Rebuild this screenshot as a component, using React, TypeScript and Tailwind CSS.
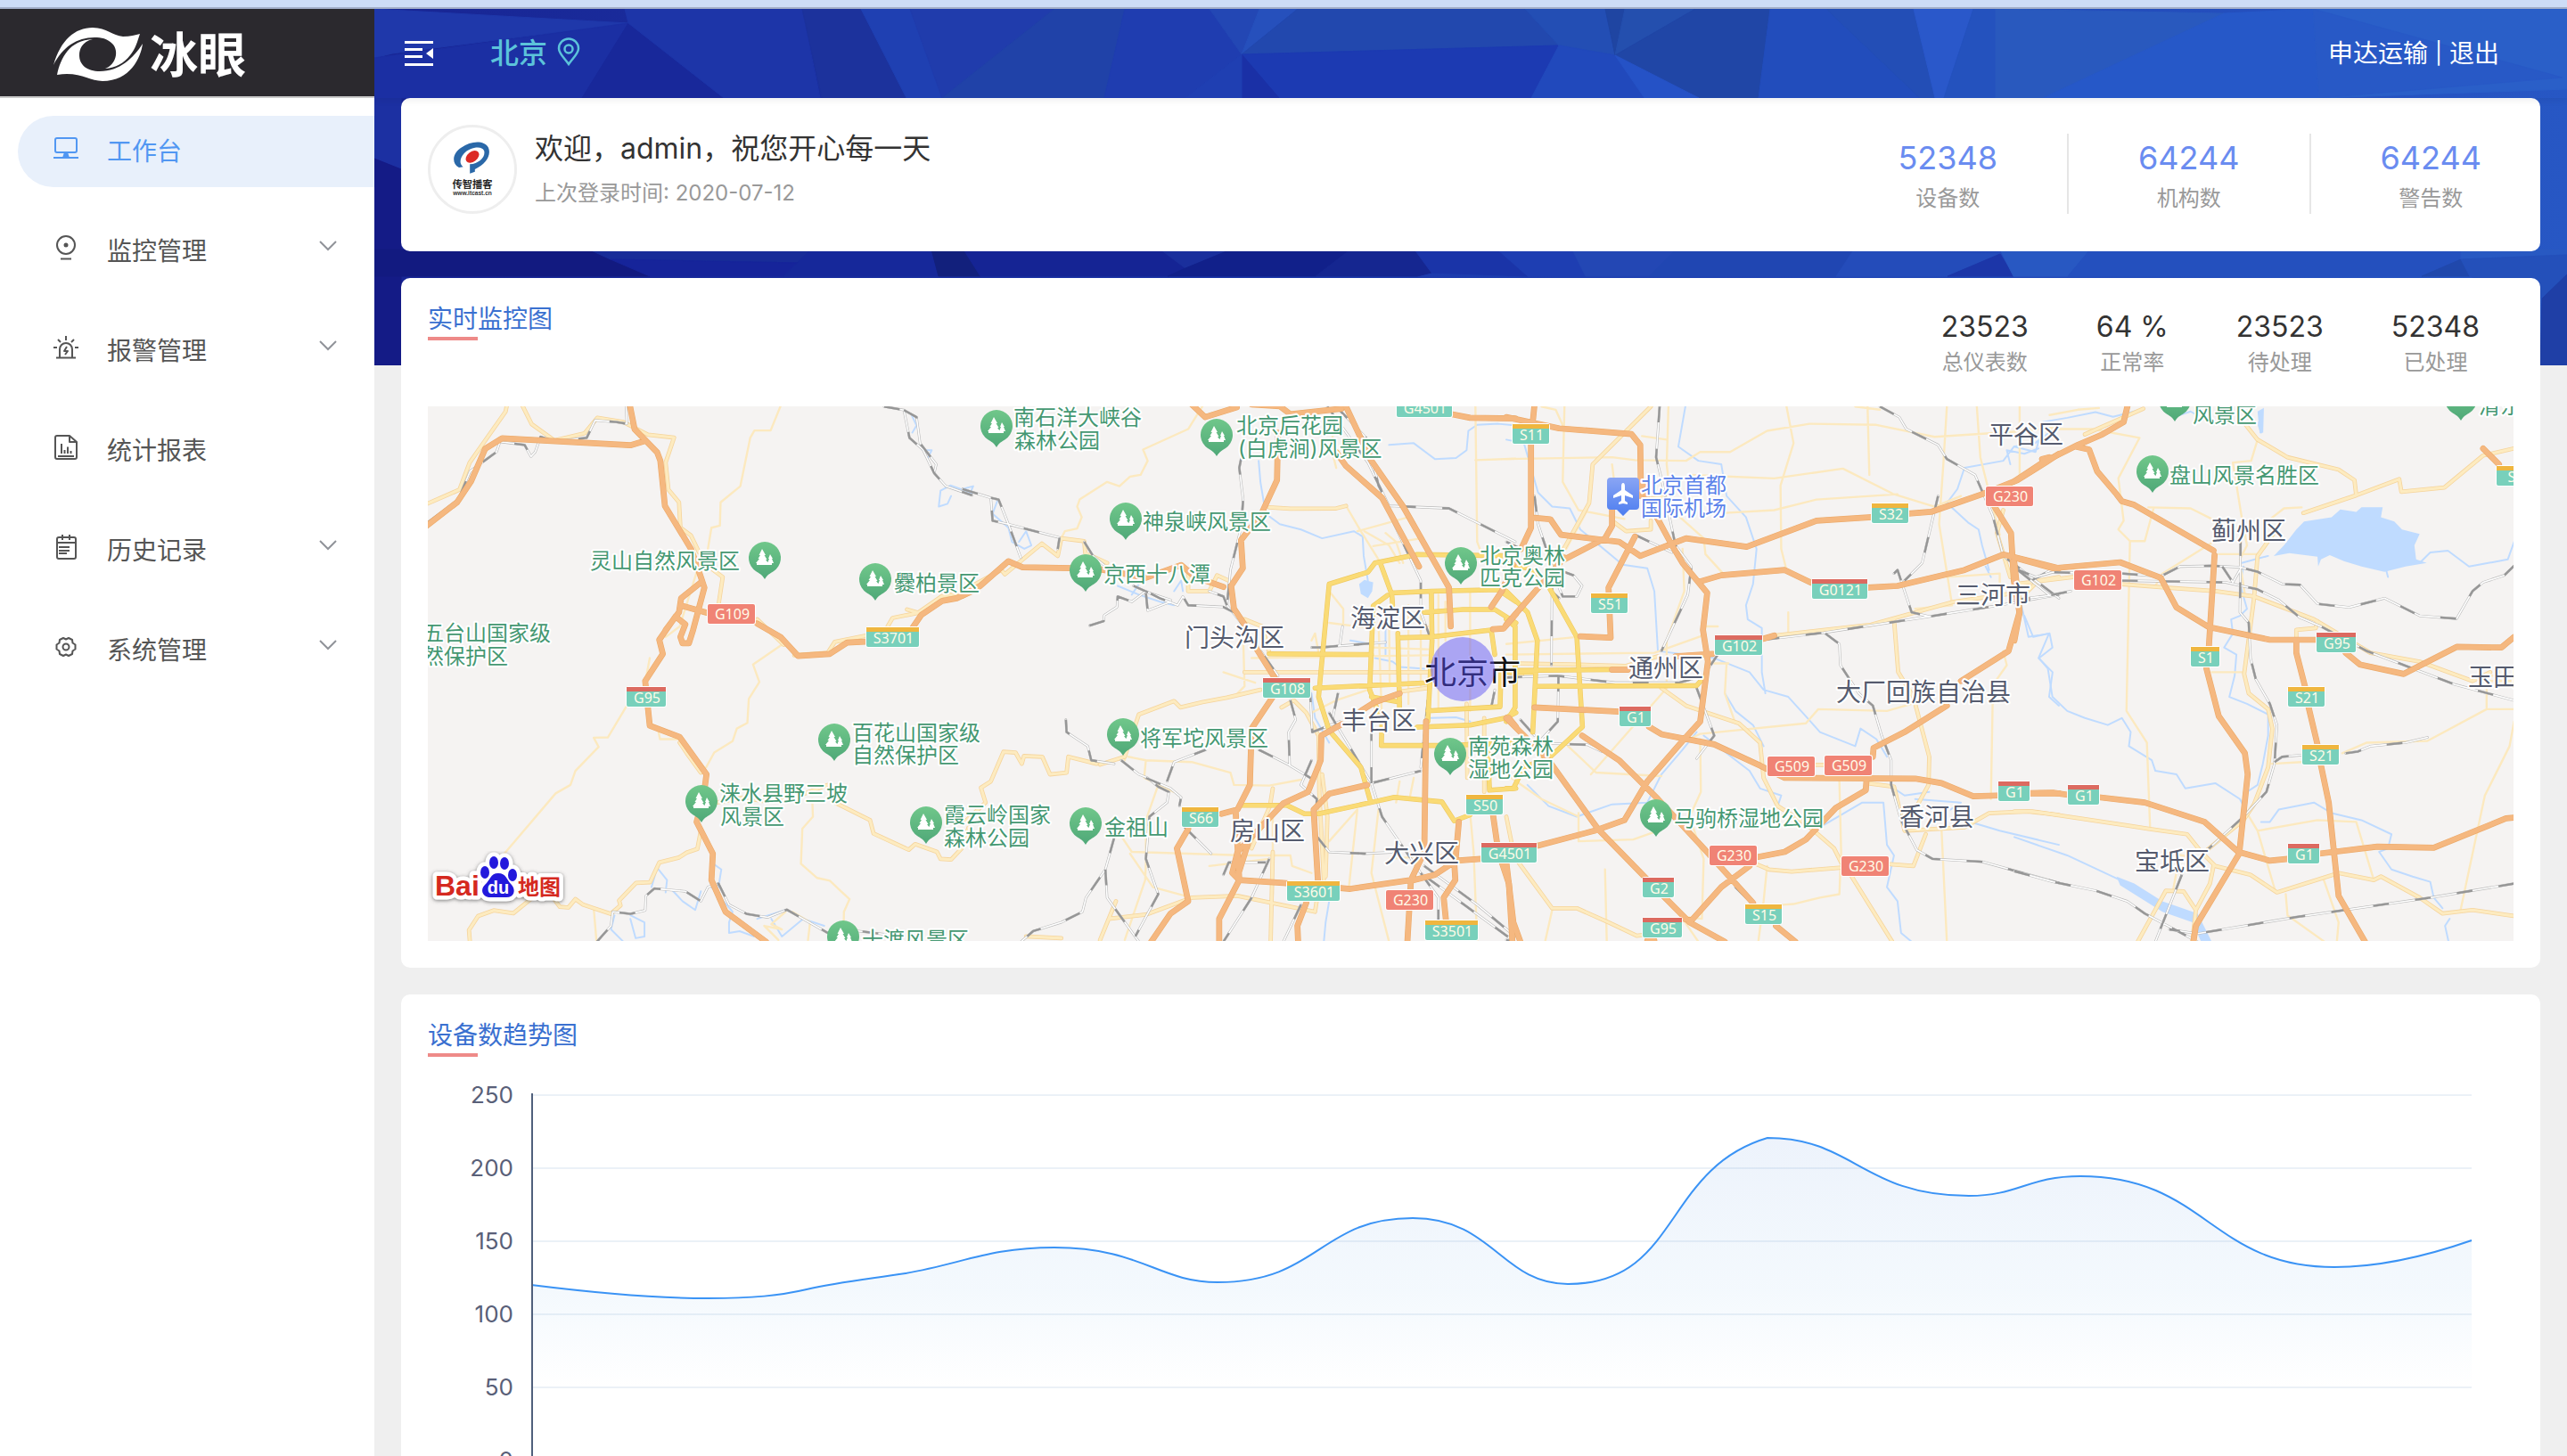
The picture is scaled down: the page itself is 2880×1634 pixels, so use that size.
import React from "react";

type RoadSet = { hw: string; ring: string; sec: string; min: string; river: string; rail: string };

/* Road geometry, one entry per map tile. */
const tiles: { x: number; roads: RoadSet }[] = [
  {
    x: -10,
    roads: {
      hw: "M0 392L25 372 108 308 148 248 188 156 236 126 600 146 640 134M598 30L612 100 676 166 685 190 698 318 772 440 800 520 810 550 778 670 766 708 748 708 742 690 756 654 728 632 682 698 692 738 642 815 655 942 740 974 816 1080 808 1140 788 1215 834 1305 830 1380 870 1470 985 1555M800 535L744 580 738 620 700 670M748 602L820 622M960 652L1026 690 1076 744 1166 738 1215 706 1290 702M1400 665L1425 628 1484 588 1526 580 1570 560",
      ring: "",
      sec: "M0 322L115 272 144 195 246 50 250 30M292 30L320 86 384 132 470 112 506 68 580 80 650 116 724 124 700 195 708 272 738 308 742 380 772 402 795 450M835 500L862 520 850 600M960 640L1035 712M1065 742L1160 735 1180 704 1300 680M1330 660L1344 636 1415 622 1484 574 1570 560M1385 612L1420 622M145 1560L142 1522 168 1482 212 1466 268 1474 320 1432M380 1430L400 1456 424 1458 444 1434 466 1450 544 1476 572 1452 568 1438 616 1388 656 1386 682 1330 738 1316 760 1302 790 1292 800 1240M845 1160L920 1146 980 1156 1040 1150M1080 1140L1160 1110M1180 1160L1280 1210 1290 1248 1390 1294 1408 1278 1470 1300 1480 1320 1510 1322 1540 1290 1560 1230M740 990L760 1020 800 1075",
      min: "M1028 30L998 104 952 104 940 125 912 262 856 308 854 374 830 380 820 440M790 500L740 660 700 690M590 885L536 975 496 976 510 1002 444 1070 430 1110 388 1134 238 1310M1030 712L948 768 966 818 936 866 932 934 902 950 890 986 838 1018 815 1060M680 960L684 980 740 980M655 750L640 830M1116 1150L1118 1200 1088 1234 1084 1334 1130 1374 1166 1382 1196 1410 1222 1434 1206 1470 1204 1555M496 1460L504 1555M1040 1470L1000 1505 1030 1520 980 1510 1020 1550M1060 1470L1110 1500 1104 1550",
      river: "M1398 60L1412 90 1400 110M1430 160L1455 160 1445 180M1570 282L1508 260 1480 275 1475 320 1500 312 1510 290M660 1400L676 1345 704 1380 700 1415M720 1410L748 1440 784 1465 800 1412M830 1330L858 1350 850 1400M830 1400L890 1470 880 1500 880 1530 910 1525 950 1540M555 1480L545 1520 580 1555M600 1480L640 1500 640 1540 615 1545 600 1490M1000 1490L1030 1540 1090 1490 1150 1510M960 1490L1040 1465",
      rail: "M25 365L112 300 145 220 220 165 230 136 300 145 318 178 330 165 345 122 385 135 476 125 500 75 560 80 590 85 588 36M1320 36L1376 46 1392 125 1430 158 1462 225 1495 262 1570 288M1376 46L1412 66 1422 140 1468 200 1462 225M505 1555L545 1510 550 1470 600 1476 642 1466 644 1425 668 1404 756 1412 800 1440 820 1400 850 1390 880 1450 930 1476 990 1486 1044 1464 1160 1530 1210 1520 1330 1535",
    },
  },
  {
    x: 600,
    roads: {
      hw: "M0 572L50 545 130 475 170 492 380 496 520 522 620 486 660 520 740 548M650 30L688 66 778 38M820 30L900 35 930 58 1075 42M895 110L892 245 848 340 790 415 795 495 762 545 770 610 800 655M1085 30L1160 190 1250 320 1380 550 1385 660M1060 165L1088 205 1190 295 1295 490M1568 70L1440 68 1390 58M835 725L888 810M880 860L820 950 815 1110 780 1180 735 1192M1570 625L1535 666 1505 668M1568 470L1530 560 1500 605M1240 850L1170 875 1130 900M1075 938L1018 970 1016 1040 980 1130 910 1162 780 1300 765 1360 785 1380 728 1490 728 1555M1148 1110L1040 1135 996 1180 1008 1380M1315 930L1310 1300 1272 1380 1100 1405 910 1388 785 1380 775 1190M640 1235L608 1290 640 1440 590 1475 535 1555M810 1275L780 1370M975 1445L950 1510 952 1555M1470 1320L1400 1325 1340 1365 1272 1382 1262 1555M1395 1330L1398 1380 1365 1430 1372 1500M1408 1215L1398 1330M1505 1195L1520 1300 1550 1390 1560 1555M1550 920L1570 945",
      ring: "M870 738L1160 740M1000 835L1320 820M1570 460L1290 456 1170 480 1150 506 1040 540 1010 860 1040 955 1130 1060 1158 1160 1225 1145 1360 1158 1395 1212 1440 1195M1158 1160L1010 1192 970 1192 920 1168 790 1168M1185 480L1218 570 1220 600M1205 572L1165 602 1155 840 1190 930 1188 998 1370 998M1215 565L1330 560 1520 556 1570 590M1330 560L1332 700 1320 930M1235 680L1240 900M1245 692L1330 690 1500 670 1510 740M1310 620L1420 612 1510 612 1570 650M1320 900L1525 888 1528 780M1290 946L1440 940 1540 920 1570 905M1490 1000L1495 1125 1570 1120M1380 998L1570 990M1160 860L1240 875",
      sec: "M0 560L110 500 120 512 225 425 270 460 280 410 345 418 348 452 410 480M870 322L930 326 1060 325 1088 318M640 510L640 560 700 560 722 515 755 530M800 790L1320 790M1240 845L1320 835M800 640L850 660 870 735M380 1050L300 1030 295 1075 248 1080 226 1030 174 1028 168 1050 150 1018 116 1016 80 1100 52 1118 65 1160 0 1220M390 1052L460 1030 500 910 600 872 618 890 680 875 750 862 845 840M905 890L940 870 975 905 1010 970 1012 1130 1025 1380M1020 1080L1035 1200 1030 1370M880 1120L872 1170 820 1290M390 1550L435 1440M415 1490L520 1478 650 1430 780 1425 1000 1470 1012 1390M880 1300L874 1555M1430 880L1432 1090M1480 920L1480 1130M640 530L640 500M180 1540L280 1545",
      min: "M680 36L640 100 512 158 525 190 505 230 475 235 445 262 410 250 332 300 325 320 338 350 325 382 290 390 280 410M1455 36L1460 420 1490 500M1060 60L1045 150 1060 210M1088 318L1130 390 1180 470 1215 570M1120 390L1265 350M1165 432L1290 412M1140 390L1210 430 1240 480M1200 395L1230 420 1250 480M795 655L800 830 780 850M1180 650L1190 930M1210 640L1212 830M1265 600L1265 880M1300 600L1300 830M1040 650L1160 665M1160 660L1320 660M990 700L1000 680 1010 735M1350 570L1350 900M1440 560L1440 900M470 1030L520 1040 650 1045 760 1075 770 1110 870 1112 960 1095M520 1040L515 1090 600 1130M555 1110L520 1210 520 1330 518 1380 460 1550M440 1240L480 1300 800 1310 930 1310 935 1340 990 1360M475 1305L540 1400 650 1430M880 1190L880 1420M1040 1270L1120 1180 1096 1400M1280 1090L1270 1140M1180 1180L1160 1360 1210 1555M1440 1190L1450 1300 1460 1555M1210 1320L1370 1308M1040 560L1080 610 1080 650M820 750L1320 742M1160 720L1320 725M1370 590L1370 700M740 790L830 820M1240 1100L1230 1160M480 940L460 1040M1455 188L1568 184M700 1340L870 1320M990 905L1060 870 1150 840",
      river: "M840 190L845 250 860 340 900 370 960 385 1020 410 1110 390 1135 405 1138 460 1150 530M1570 90L1520 85 1460 88 1435 105 1430 160 1400 182 1340 185 1280 140 1210 145M100 300L85 340 130 380 140 420 175 440 195 430 180 390 160 420M0 270L30 262 20 285M440 545L500 570 560 590 600 600M480 570L500 540M600 560L620 530 625 560M990 850L1000 920 1040 990M1170 750L1220 760 1240 775 1310 780M1040 1440L1030 1500 1025 1555M1200 650L1200 740M1330 920L1400 918 1440 930M1100 700L1160 710",
      rail: "M0 270L80 295 85 360 130 370 275 408M80 295L102 300 130 370 165 465M275 408L270 440M345 420L370 460 400 485M360 658L400 645 402 628 438 605 440 575 480 590 520 560 560 580 610 600 625 575 640 600 740 605 770 620M485 545L530 565 590 585M750 600L740 575 700 560M520 565L525 615 590 590M790 185L785 210 796 300 790 380 760 500 750 600 790 650 895 800M990 720L1010 720 1200 705M1020 720L1070 715 1078 660M1035 36L1150 195 1210 318M1060 36L1150 130 1180 260 1210 318 1380 325 1568 420M1200 318L1300 530 1300 620 1330 700M890 810L880 850M930 870L945 925 925 960 928 1055 990 1092M985 830L992 960 1070 930M1040 905L1160 1105 1300 1070M1065 850L1050 920M1320 870L1300 1060M1160 940L1160 1105 1190 1200 1300 1360 1560 1550M990 1040L960 1110 1005 1150 1000 1250 1040 1300 1140 1305 1240 1300M840 1010L930 1055M293 925L295 960 355 1000 365 1040 430 1050M450 1040L500 1080 525 1090 555 1115 585 1130 580 1160 530 1200 520 1320 555 1420 490 1540M520 1090L590 1120 620 1145 615 1170M580 1100L600 1045 690 1010M430 1260L405 1350 350 1430 340 1470 280 1500 200 1525 160 1560M405 1350L410 1430 500 1555M630 1230L705 1305M870 1320L820 1430 740 1555M740 1365L755 1330 860 1330M960 1450L910 1555M1300 1360L1350 1430 1350 1500M1310 1340L1460 1450 1568 1540M1500 890L1510 840",
    },
  },
  {
    x: 1210,
    roads: {
      hw: "M80 30L70 130 70 380 42 440M0 66L150 98 355 114 380 145 382 290M390 260L400 300 470 430 500 480 570 565 558 670 572 760 550 930 500 985 400 1100 335 1210 250 1240 90 1282M80 352L125 356 155 400 320 420 380 460 510 410 682 434 880 360 1037 350M1140 340L1205 335 1350 285 1450 245 1530 195 1568 170M1520 185L1540 180M300 330L300 375 280 410 165 470M165 465L0 655M365 405L290 550 296 692 210 688M545 534L610 515 790 500 865 536M1025 550L1110 545 1300 500 1410 456 1568 495M1385 320L1432 395 1440 530 1456 620 1425 730 1290 815M480 745L585 738M730 695L760 686M345 783L300 783M1250 885L1130 960 1042 1005 1040 1030M80 890L320 902M405 945L440 966 590 995 720 1055 790 1090 1160 1092 1235 1105 1325 1142 1395 1140M1485 1134L1568 1134M1022 1095L1020 1125 935 1175 850 1265 790 1300 710 1315M690 1340L610 1400 525 1495 505 1490M215 970L320 1040 430 1150 560 1290 700 1445M0 920L120 1040 260 1235 450 1430 520 1500 620 1555M765 1510L820 1555M0 1330L20 1500 40 1555M400 1552L420 1552",
      ring: "M0 560L60 620 88 700 75 960M0 640L25 660 25 890 0 930M60 495L105 520 200 690 216 945 125 1030 50 1060 20 1120 0 1120M90 830L540 828 565 800M35 785L300 783M0 790L75 790M0 480L60 495 105 520",
      sec: "M410 36L245 200 235 310 130 500M760 686L1035 655 1270 590 1480 560 1510 530 1568 520M0 765L180 768 340 772 430 745M380 270L395 300 460 290M1100 640L1112 790 1155 860 1200 1030 1198 1110 1165 1170M440 835L510 885 660 935 720 990 730 1090 770 1170 850 1220 930 1290 950 1330M1022 1105L1100 1115 1130 1240 1300 1230 1370 1190 1480 1185 1568 1195M710 1335L745 1350 810 1356 945 1345M1090 1335L1155 1340 1190 1250M980 1370L1095 1555M20 1310L130 1460 200 1460 290 1500 370 1538 400 1535M1410 330L1392 395 1430 520M0 1200L20 1300M875 1053L905 1053M300 360L340 390 410 385 410 360M0 790L45 800",
      min: "M100 36L140 45 165 100M165 36L160 250 205 330 335 355M0 185L300 180 365 188 510 190 550 165 635 165 740 105 860 85 1050 88 1215 122 1480 105 1568 90M460 36L455 200 470 330 560 410 565 455 615 510M385 120L455 130M520 230L760 240 955 212 1100 285 1215 320 1290 290M620 338L760 330 880 300 1110 285M795 36L815 140 778 260 780 440 795 500M1025 36L1030 230M1250 36L1240 200 1228 370 1265 600M1335 36L1345 180 1400 400M990 36L1060 45M0 710L200 690M0 740L420 735 560 685 560 660 600 660M500 440L505 560 455 700 455 830M625 765L620 850 650 935M590 765L630 765M455 835L240 1080M175 1000L255 1075 440 1085 M510 985L550 965 850 935 885 895 1080 900 1150 880M800 620L800 680M1250 520L1400 510 1400 560M1160 610L1265 600M1380 870L1375 1150M1410 730L1420 770 1385 820M550 980L552 1130 520 1200 560 1320M205 1190L205 1270 360 1265 430 1240M945 1100L950 1300 945 1420 890 1430 815 1448 785 1450M740 1340L730 1440 715 1555M560 1320L555 1490 510 1485M280 1350L285 1555M130 1465L110 1555M500 1490L545 1555M1235 1240L1250 1555M0 1080L100 1150 205 1200M300 200L305 240 300 330M230 330L170 440",
      river: "M508 36L488 150 545 190 610 200 625 290 680 350 710 440 700 540 680 600 685 640 725 665 725 790 735 850M0 130L50 140 90 280 130 320 180 325 210 385 330 485 400 495 420 560 430 730 590 750 690 790 730 840 800 860 850 915 890 960 990 1000 1005 950 1050 980 1080 1030M1568 90L1500 140 1440 150 1410 190 1300 210 1280 270 1250 310 1310 365 1340 385 1350 430 1370 500M560 970L690 1070 720 1120 780 1140 770 1170M60 1110L120 1170 200 1200 300 1165 400 1160 440 1080 500 1010 540 960M620 850L650 900 700 940 730 1000M890 1230L1010 1160 1070 1160 1080 1280 1100 1310 1080 1400 1110 1440 1120 1530 1150 1555M1100 1120L1130 1140 1200 1130M1160 1150L1290 1160 1260 1180M1300 1210L1400 1240 1568 1280M1430 200L1420 160 1470 170 1510 155M1470 630L1495 690 1540 680 1510 750 1550 790 1540 860 1568 885M1360 490L1375 520",
      rail: "M435 36L425 180 440 240 480 430 525 490 515 570 440 730M80 290L90 370 130 490 128 770M0 420L42 440M150 500L190 515 215 545 200 575 160 575 145 540M128 560L150 580M365 400L470 450M1060 36L1115 66 1135 100 1225 145 1250 185 1330 230 1380 345 1410 460 1568 580M1225 290L1180 480 1130 530M1100 510L1110 500 1150 620 1200 632M730 698L900 678 1200 632 1400 600 1568 570M905 680L945 710 948 770 1000 850 1040 885 1065 970 1092 1040 1092 1110 1120 1210 1165 1295 1210 1320 1350 1328 1568 1388M0 805L145 800 310 820 490 820 560 800 600 740M148 800L146 930 100 980M60 990L230 996 270 1015M540 835L590 970 540 1035M40 925L80 970M650 1400L690 1440M1490 530L1545 500 1568 505M0 1550L20 1555",
    },
  },
  {
    x: 1780,
    roads: {
      hw: "M0 248L80 195 180 145 250 115 310 80 322 30M175 150L212 158 235 220 290 285 305 305 340 315 565 445M568 458L552 715M545 780L580 915 654 1020 662 1080 638 1305 515 1510 508 1555M0 465L110 495 300 478 415 522 460 606 552 662 725 698 860 698M800 700L800 735 825 832M940 735L980 768 1105 795 1255 718 1382 720 1418 690M835 890L860 995M870 1055L892 1160 920 1425 995 1555M0 700L15 620 0 480M45 1133L110 1132 152 1138M240 1145L370 1160 540 1215 635 1300 725 1325 776 1320M865 1305L1030 1285 1190 1288 1395 1205 1418 1203M1330 155L1375 200",
      ring: "",
      sec: "M366 42L200 115M650 80L690 130 775 180 920 215 965 245 970 288M820 338L970 288 1092 242 1098 278 1220 266 1330 175 1418 155M0 540L165 520M305 540L430 550 570 560 680 575 850 640 1010 735 1150 760 1300 815 1350 790M800 690L800 670 855 665 860 645M740 390L690 460 680 580 652 795 665 850 720 895 732 950 720 1060 680 1165 650 1210 540 1300M0 1185L50 1185 320 1225 385 1235 490 1250 530 1300 570 1340 670 1365 745 1415 920 1360 1020 1380 1040 1370 1150 1430 1215 1475 1300 1465 1418 1482M350 1555L430 1410 480 1412 515 1465 555 1390 565 1340M515 1465L505 1555",
      min: "M0 100L220 100 355 125 295 240 310 360 295 385 328 418 318 900 376 990 385 1230M100 60L180 45 240 40M690 130L672 190 620 195 645 350 660 430 640 470M380 322L500 325 570 360M395 325L370 418 328 418M720 360L765 325 815 322M400 545L420 510 565 420M580 455L690 455M640 480L655 575M560 790L652 790M730 1050L815 1045M930 1020L1000 990 1172 985 1340 895 1418 895M1340 840L1340 890M1418 930L1405 1000 1335 1140 1265 1470M690 1240L860 1210 970 1215 1020 1380M660 1190L690 1240 740 1410M770 1420L775 1480 880 1555M878 1380L920 1500 915 1555M450 1320L465 1330 450 1410M15 36L15 230M1345 800L1415 800M1350 815L1415 815M1375 780L1375 830M1395 780L1395 830M530 1320L420 1300",
      river: "M80 80L150 68 230 52 280 65 360 45M470 60L500 50 560 85 690 80 700 110M1150 480L1180 450 1230 445 1290 490 1345 480 1400 470 1418 420M20 600L40 690 100 680 108 720 70 750 95 780 108 860 150 900 200 920 265 940 305 920 330 960 325 1000 390 1040 400 1070 460 1080 485 1120 570 1105 640 1150 660 1190M650 490L640 540 660 610 640 630 615 640 620 680 595 720 630 740 625 800 610 860 660 880 720 910 720 970 705 1050 690 1110 660 1130M700 1215L725 1215 750 1180 850 1160 900 1190 985 1210 1070 1250 1060 1290 1035 1300 1070 1350 1130 1370 1180 1385 1190 1430 1215 1460M1235 1490L1222 1510 1232 1555M0 1258L150 1310 300 1380M0 150L60 165 70 130M1055 500L1060 520M645 480L720 460",
      rail: "M0 495L60 520 110 506 168 508M10 500L100 572 160 560M0 585L100 572M305 510L415 518 470 490 560 488 640 492 690 505 760 540 810 542 860 596 950 606 1050 580 1150 630 1255 638 1300 560 1330 535 1390 515 1418 488M305 530L600 535 690 555 750 585 810 635 870 660 1000 730 1250 825 1418 870M642 415L640 620 665 650 670 750 685 810 725 880 745 940 738 1050 715 1130 650 1200 520 1320M590 490L620 535 640 500M738 1045L760 1030 815 1025M940 1020L975 1015 1010 1000 1110 990 1172 975M0 1355L110 1385 230 1410 320 1440 370 1475 520 1555M1418 1390L1180 1430 800 1485 520 1532 440 1520M475 1365L400 1555",
    },
  },
];

type Label = [string, number, number];
const parkLabels: Label[] = [
  ["灵山自然风景区", 182, 182], ["爨柏景区", 523, 207], ["五台山国家级", -6, 263], ["然保护区", -6, 289],
  ["百花山国家级", 476, 375], ["自然保护区", 476, 400], ["涞水县野三坡", 327, 443], ["风景区", 328, 469],
  ["霞云岭国家", 579, 467], ["森林公园", 579, 493], ["十渡风景区", 487, 607], ["南石洋大峡谷", 657, 21],
  ["森林公园", 658, 47], ["北京后花园", 907, 30], ["(白虎涧)风景区", 909, 56], ["神泉峡风景区", 802, 138],
  ["京西十八潭", 758, 197], ["北京奥林", 1180, 176], ["匹克公园", 1180, 201], ["将军坨风景区", 799, 381],
  ["南苑森林", 1167, 390], ["湿地公园", 1167, 416], ["金祖山", 759, 481], ["马驹桥湿地公园", 1398, 471],
  ["风景区", 1980, 18], ["清东陵", 2301, 8], ["盘山风景名胜区", 1954, 86],
];
const airportLabels: Label[] = [["北京首都", 1361, 97], ["国际机场", 1361, 123]];
const districtLabels: Label[] = [
  ["门头沟区", 849, 270], ["海淀区", 1035, 248], ["丰台区", 1025, 363], ["房山区", 900, 487], ["大兴区", 1073, 512],
  ["平谷区", 1751, 42], ["三河市", 1714, 222], ["通州区", 1347, 304], ["大厂回族自治县", 1580, 331],
  ["香河县", 1651, 471], ["蓟州区", 2001, 150], ["玉田县", 2289, 314], ["宝坻区", 1915, 521],
];
const parkPins: [number, number][] = [
  [378, 170], [502, 194], [456, 374], [307, 443], [559, 467], [466, 595], [638, 22], [885, 32], [783, 126], [738, 184],
  [1159, 176], [780, 368], [1147, 390], [738, 468], [1378, 459], [1960, -7], [2281, -8], [1935, 73],
];
type Badge = [string, number, number, number, "r" | "g" | "o"];
const badges: Badge[] = [
  ["G109", 314, 222, 53, "r"], ["S3701", 492, 248, 59, "o"], ["G95", 223, 315, 44, "g"], ["G4501", 1087, -10, 62, "g"],
  ["G108", 937, 305, 53, "g"], ["S66", 846, 450, 41, "o"], ["S3601", 964, 533, 59, "o"], ["G230", 1075, 543, 53, "r"],
  ["S50", 1165, 436, 41, "o"], ["G4501", 1182, 490, 62, "g"], ["S3501", 1119, 577, 59, "o"], ["S11", 1217, 20, 41, "o"],
  ["S32", 1620, 109, 41, "o"], ["G230", 1748, 90, 53, "r"], ["S51", 1305, 210, 41, "o"], ["G0121", 1553, 194, 62, "g"],
  ["G102", 1444, 257, 53, "g"], ["G1", 1337, 337, 35, "g"], ["G509", 1503, 393, 53, "r"], ["G509", 1567, 392, 53, "r"],
  ["G1", 1762, 421, 35, "g"], ["G230", 1438, 493, 53, "r"], ["G230", 1586, 505, 53, "r"], ["G2", 1363, 529, 35, "g"],
  ["S15", 1478, 559, 41, "o"], ["G95", 1363, 574, 44, "g"], ["S6", 2321, 67, 41, "o"], ["G102", 1847, 184, 53, "r"],
  ["G95", 2119, 254, 44, "g"], ["S1", 1978, 270, 32, "o"], ["S21", 2087, 315, 41, "o"], ["S21", 2103, 380, 41, "o"],
  ["G1", 1840, 425, 35, "g"], ["G1", 2087, 491, 35, "g"],
];

const badgeTop = { r: "#f08375", g: "#dc6a60", o: "#efb63f" };

function Roads({ kind }: { kind: keyof RoadSet }) {
  const style: Record<keyof RoadSet, [string, number][]> = {
    river: [["#bfdbff", 5]],
    min: [["#fce9bf", 6]],
    sec: [["#f5d49c", 12], ["#fdebc0", 8]],
    rail: [["#b9b9b9", 7]],
    ring: [["#efc95f", 14], ["#fadb76", 11]],
    hw: [["#eca968", 17], ["#f5b880", 14]],
  };
  return (
    <>
      {style[kind].map(([stroke, w]) =>
        tiles.map((t) => (
          <g key={t.x + stroke} transform={`translate(${t.x} -14) scale(0.3954)`} fill="none" strokeLinejoin="round" strokeLinecap="round">
            <path d={t.roads[kind]} stroke={stroke} strokeWidth={w} />
            {kind === "rail" && (
              <>
                <path d={t.roads.rail} stroke="#ffffff" strokeWidth={4} />
                <path d={t.roads.rail} stroke="#969696" strokeWidth={6} strokeLinecap="butt" strokeDasharray="45 75" />
              </>
            )}
          </g>
        )),
      )}
    </>
  );
}

function MapLabels({ items, className }: { items: Label[]; className: string }) {
  return (
    <g className={className} stroke="#ffffff" strokeWidth={4} strokeLinejoin="round" style={{ paintOrder: "stroke" }}>
      {items.map(([t, x, y]) => (
        <text key={t + x + y} x={x} y={y}>{t}</text>
      ))}
    </g>
  );
}

function CityMap() {
  return (
    <svg viewBox="0 0 2340 600" preserveAspectRatio="xMidYMid slice" className="block w-full bg-[#f5f3f2]" role="img" aria-label="北京市地图">
      <defs>
        <linearGradient id="pin" x1="0" y1="0" x2="0" y2="1">
          <stop offset="0" stopColor="#70c78a" />
          <stop offset="1" stopColor="#4fa878" />
        </linearGradient>
        <linearGradient id="air" x1="0" y1="0" x2="0" y2="1">
          <stop offset="0" stopColor="#8aa5f4" />
          <stop offset="1" stopColor="#4c7df0" />
        </linearGradient>
        <filter id="soft" x="-10%" y="-10%" width="120%" height="120%">
          <feDropShadow dx="0" dy="1" stdDeviation="2" floodColor="#555555" floodOpacity="0.8" />
        </filter>
      </defs>
      <rect width="2340" height="600" fill="#f5f3f2" />
      <Roads kind="river" />
      <g transform="translate(1780 -14) scale(0.3954)" fill="#bfdbff">
        <path d="M736 460L765 430 800 385 822 362 900 350 925 328 970 335 985 322 1045 322 1040 350 1078 362 1100 385 1150 398 1135 430 1140 470 1170 480 1110 490 1050 505 985 490 935 475 895 458 870 470 862 490 860 462 780 452Z" />
        <path d="M690 50L708 40 706 110 696 112Z" />
        <path d="M290 1370L340 1390 420 1440 520 1475 560 1555 530 1555 505 1500 420 1470 300 1395Z" />
      </g>
      <path transform="translate(600 -14) scale(0.3954)" d="M1125 540L1140 528 1165 535 1162 560 1150 580 1130 568Z" fill="#bfdbff" />
      <Roads kind="min" />
      <Roads kind="sec" />
      <Roads kind="rail" />
      <Roads kind="ring" />
      <Roads kind="hw" />

      {badges.map(([t, x, y, w, k]) => (
        <g key={t + x}>
          <rect x={x - 1} y={y - 1} width={w + 2} height={24} rx={3} fill="#ffffff" />
          <rect x={x} y={y} width={w} height={22} rx={2} fill={k === "r" ? "#f08375" : "#78d0bb"} />
          {k !== "r" && <rect x={x} y={y} width={w} height={5} fill={badgeTop[k]} />}
          <text x={x + w / 2 + 1} y={y + (k === "r" ? 17 : 18)} textAnchor="middle" fill="#fffbe8" className="font-['Noto_Sans',sans-serif] text-[16px]">{t}</text>
        </g>
      ))}

      {parkPins.map(([x, y]) => (
        <g key={`${x}-${y}`} transform={`translate(${x} ${y})`}>
          <path d="M0 24C-3 19-6 17.500-10 15A18 18 0 1 1 10 15C6 17.500 3 19 0 24Z" fill="url(#pin)" />
          <path d="M-3 -10L1 -3H-.5L2.500 2H1L4 6H8V8H-9V6H-4V6H-10L-6 1H-7.500L-5 -3H-6.500ZM6 -4L9 1H8L10 6H3L5 1H4Z" fill="#ffffff" />
        </g>
      ))}
      <g>
        <path d="M1327 80H1355Q1359 80 1359 84V112Q1359 116 1355 116H1348L1341 123 1334 116H1327Q1323 116 1323 112V84Q1323 80 1327 80Z" fill="url(#air)" />
        <path d="M1341 86Q1343 86 1343 90V94L1352 100V103L1343 100V106L1346 108V110L1341 109 1336 110V108L1339 106V100L1330 103V100L1339 94V90Q1339 86 1341 86Z" fill="#ffffff" />
      </g>

      <MapLabels items={parkLabels} className="fill-[#459872] text-[24px]" />
      <MapLabels items={airportLabels} className="fill-[#5b82ea] text-[24px]" />
      <MapLabels items={districtLabels} className="fill-[#555b6e] text-[28px]" />
      <text x="1118" y="312" fill="#111111" stroke="#ffffff" strokeWidth="3" style={{ paintOrder: "stroke" }} className="text-[36px]">北京市</text>
      <circle cx="1161" cy="295" r="36" fill="#5a50f5" fillOpacity="0.48" />

      {/* Baidu watermark */}
      <g filter="url(#soft)">
        <g stroke="#ffffff" strokeWidth="9" strokeLinejoin="round" fill="#ffffff">
          <text x="8" y="549" className="font-['Liberation_Sans',sans-serif] text-[32px] font-bold">Bai</text>
          <text x="101" y="548" className="text-[24px] font-bold">地图</text>
          <ellipse cx="64" cy="523" rx="5" ry="7" />
          <ellipse cx="74" cy="512" rx="5" ry="7" />
          <ellipse cx="86" cy="513" rx="5" ry="7" />
          <ellipse cx="95" cy="526" rx="5" ry="7" />
          <path d="M79 524C70 524 70 532 64 537 58 543 62 551 70 551 76 551 82 551 88 551 97 551 99 543 94 537 88 531 88 524 79 524Z" />
        </g>
      </g>
      <g fill="#d5291f">
        <text x="8" y="549" className="font-['Liberation_Sans',sans-serif] text-[32px] font-bold">Bai</text>
        <text x="101" y="548" className="text-[24px] font-bold">地图</text>
      </g>
      <g fill="#2319dc">
        <ellipse cx="64" cy="523" rx="5" ry="7" />
        <ellipse cx="74" cy="512" rx="5" ry="7" />
        <ellipse cx="86" cy="513" rx="5" ry="7" />
        <ellipse cx="95" cy="526" rx="5" ry="7" />
        <path d="M79 524C70 524 70 532 64 537 58 543 62 551 70 551 76 551 82 551 88 551 97 551 99 543 94 537 88 531 88 524 79 524Z" />
      </g>
      <text x="79" y="547" textAnchor="middle" fill="#ffffff" className="font-['Liberation_Sans',sans-serif] text-[20px] font-bold">du</text>
    </svg>
  );
}

const curve =
  "M116 240C180 248 250 255 314 255 365 255 395 252 425 245 460 237 490 234 536 227 600 216 630 198 703 198 800 198 820 237 886 237 1000 237 1000 165 1105 165 1195 165 1205 239 1279 239 1405 239 1385 110 1503 75 1600 75 1610 140 1729 140 1785 140 1795 118 1854 118 1995 118 2000 220 2139 220 2195 220 2250 205 2293 190";

function TrendChart() {
  return (
    <svg viewBox="0 0 2340 500" className="block w-full" role="img" aria-label="设备数趋势图">
      <defs>
        <linearGradient id="area" gradientUnits="userSpaceOnUse" x1="0" y1="75" x2="0" y2="355">
          <stop offset="0" stopColor="#4a84dc" stopOpacity="0.1" />
          <stop offset="0.6" stopColor="#5aa5e6" stopOpacity="0.07" />
          <stop offset="1" stopColor="#5aa5e6" stopOpacity="0" />
        </linearGradient>
      </defs>
      {[250, 200, 150, 100, 50, 0].map((v, i) => (
        <g key={v}>
          <path d={`M116 ${27 + i * 82}H2293`} stroke="#ebf1f7" strokeWidth="2" />
          <text x="96" y={36 + i * 82} textAnchor="end" fill="#596078" className="text-[26px]">{v}</text>
        </g>
      ))}
      <path d={curve + "V437H116Z"} fill="url(#area)" />
      <path d={curve} fill="none" stroke="#3a93f5" strokeWidth="2" />
      <path d="M117 25V437" stroke="#50607c" strokeWidth="2" />
    </svg>
  );
}

const facets: [string, string][] = [
  ["0,0 285,16 20,50 0,55", "#1f38aa"],
  ["0,55 285,16 233,100 0,100", "#1b2fa3"],
  ["285,16 392,100 233,100", "#18289a"],
  ["281,0 480,0 500,100 392,100 285,16", "#1d35a8"],
  ["480,0 546,0 597,100 502,100", "#1c329c"],
  ["546,0 601,0 637,100 597,100", "#1f40b2"],
  ["601,0 763,0 637,100", "#203cac"],
  ["763,0 842,0 819,100 637,100", "#2042a8"],
  ["842,0 937,0 973,51 910,100 819,100", "#1f3db0"],
  ["937,0 993,0 973,51", "#2347b4"],
  ["993,0 1036,0 973,51", "#2650bc"],
  ["1036,0 1291,0 1329,41 973,51", "#2248ae"],
  ["973,51 1329,41 1298,100 1015,100", "#1c3ab2"],
  ["973,51 1015,100 973,100", "#1a30a6"],
  ["973,51 973,100 910,100", "#1f3fb2"],
  ["1291,0 1381,0 1392,52 1329,41", "#234eb4"],
  ["1329,41 1392,52 1425,100 1298,100", "#2149bc"],
  ["1381,0 1403,0 1392,52", "#1f45a2"],
  ["1403,0 1482,0 1392,52", "#244fae"],
  ["1482,0 1566,0 1553,100 1486,100 1392,52", "#2046a6"],
  ["1392,52 1486,100 1425,100", "#2552c6"],
  ["1566,0 1629,0 1734,100 1553,100", "#224dbc"],
  ["1629,0 1727,0 1751,100 1734,100", "#234eb6"],
  ["1727,0 1794,0 1761,100 1751,100", "#2a58ca"],
  ["1794,0 1819,0 1819,100 1761,100", "#2452be"],
  ["1819,0 2075,5 1872,100 1819,100", "#2959be"],
  ["2075,5 2175,0 2182,100 1872,100", "#2658c8"],
  ["2175,0 2460,0 2460,90 2182,100", "#2a5fc8"],
  ["2175,0 2455,77 2182,100", "#2859c6"],
  ["0,100 30,100 30,180 0,168", "#1c30a2"],
  ["0,168 30,180 30,400 0,400", "#141b86"],
  ["0,270 241,270 265,281 309,300 0,300", "#121a80"],
  ["241,270 490,270 479,285 265,281", "#182c98"],
  ["265,281 479,285 459,300 309,300", "#16249a"],
  ["490,270 625,270 633,300 459,300", "#16289a"],
  ["625,270 661,270 680,300 633,300", "#12207c"],
  ["661,270 882,270 910,291 890,300 680,300", "#152494"],
  ["882,270 961,270 910,291", "#1a2f9c"],
  ["961,270 1095,270 1056,300 890,300 910,291", "#11208a"],
  ["1095,270 1167,270 1186,296 1170,300 1056,300", "#152690"],
  ["1167,270 1260,270 1294,300 1186,296", "#1a34a8"],
  ["1260,270 1344,270 1359,300 1294,300", "#1e3eb2"],
  ["1344,270 1460,270 1430,300 1359,300", "#2347b4"],
  ["1460,270 1660,270 1640,300 1430,300", "#2046b2"],
  ["1660,270 1824,275 1765,300 1640,300", "#244cba"],
  ["1824,275 1839,300 1765,300", "#1c36a8"],
  ["1824,270 1925,270 1900,300 1839,300", "#2858c2"],
  ["1925,270 2341,270 2341,281 2297,300 1900,300", "#2450be"],
  ["2341,281 2351,300 2297,300", "#2048ac"],
  ["2341,270 2460,270 2460,276 2341,281", "#2859c2"],
  ["2341,281 2460,276 2460,298 2432,325 2351,300", "#2450ba"],
  ["2432,325 2460,298 2460,400 2430,400", "#1f3fa6"],
];

function Backdrop() {
  return (
    <svg viewBox="0 0 2460 400" preserveAspectRatio="none" className="absolute inset-x-0 top-0 h-[400px] w-full" aria-hidden="true">
      <defs>
        <linearGradient id="base">
          <stop offset="0" stopColor="#182594" />
          <stop offset="0.5" stopColor="#1d3cae" />
          <stop offset="1" stopColor="#2757c4" />
        </linearGradient>
      </defs>
      <rect width="2460" height="400" fill="url(#base)" />
      {facets.map(([p, c]) => (
        <polygon key={p} points={p} fill={c} stroke={c} strokeWidth="1" />
      ))}
    </svg>
  );
}

function Icon({ children }: { children: React.ReactNode }) {
  return (
    <svg viewBox="0 0 28 28" className="mb-2 size-7 shrink-0" fill="none" stroke="currentColor" strokeWidth="2" strokeLinejoin="round" aria-hidden="true">
      {children}
    </svg>
  );
}

const menu: { label: string; arrow?: boolean; active?: boolean; icon: React.ReactNode }[] = [
  {
    label: "工作台", active: true,
    icon: <><rect x="2" y="3" width="24" height="16" rx="2" /><path d="M0 25H28" /><path d="M12 19H16L18 25H10Z" fill="currentColor" stroke="none" /></>,
  },
  {
    label: "监控管理", arrow: true,
    icon: <><circle cx="14" cy="11" r="10" /><circle cx="14" cy="11" r="2.500" fill="currentColor" stroke="none" /><path d="M8 26.500H20" /></>,
  },
  {
    label: "报警管理", arrow: true,
    icon: <><path d="M7 25V16A7 7 0 0 1 21 16V25M3 25.500H25M14 1V6M5 5L8 8M23 5L20 8M0 14H4M24 14H28" /><path d="M15 13L12 18H16L13 22" /></>,
  },
  {
    label: "统计报表",
    icon: <><path d="M18 1H4Q2 1 2 3V25Q2 27 4 27H24Q26 27 26 25V8ZM18 1V8H26" /><path d="M9 21V10M12.500 21V17M16 21V13.500M19.500 21V18M5 24H23" /></>,
  },
  {
    label: "历史记录", arrow: true,
    icon: <><rect x="4" y="3" width="21" height="24" rx="2" /><path d="M4 9H25M10 0V6M18 0V6M6 14H18M6 18H18M6 21H15" /></>,
  },
  {
    label: "系统管理", arrow: true,
    icon: <><path d="M11 4L14 5.500 17 4 21 6 21.500 9.500 24.500 11.500V16.500L21.500 18.500 21 22 17 24 14 22.500 11 24 7 22 6.500 18.500 3.500 16.500V11.500L6.500 9.500 7 6Z" /><circle cx="14" cy="14" r="3.500" /></>,
  },
];

function Sidebar() {
  return (
    <aside className="flex w-[420px] shrink-0 flex-col bg-white">
      <div className="flex h-[100px] items-center gap-2 border-b-2 border-[#c9c9c9] bg-[#2b292e] pt-1 pl-[60px]">
        <svg viewBox="0 0 100 60" className="h-[60px] w-[100px]" fill="#ffffff" aria-hidden="true">
          <path d="M0 42C8 14 24 0 44 0 60 0 66 9 78 10 86 10 92 8 97 7 94 16 92 24 86 31 79 40 70 45 58 46 70 42 74 26 66 18 60 12 54 11 46 11 26 11 10 22 0 42Z" />
          <path d="M4 53C8 34 18 14 44 13 32 16 29 24 29 31 29 42 38 49 52 49 74 49 90 34 100 18 98 34 86 60 55 60 40 60 30 49 4 53Z" />
        </svg>
        <span className="pt-1 text-[54px] leading-[60px] font-bold text-white">冰眼</span>
      </div>
      <nav className="flex flex-col gap-8 pt-5 pl-5">
        {menu.map((m) => (
          <a
            key={m.label}
            href="#"
            className={
              m.active
                ? "flex h-20 items-center rounded-l-full bg-[#e8f0fb] pr-[42px] pl-10 text-[28px] text-[#5197f2]"
                : "flex h-20 items-center rounded-l-full pr-[42px] pl-10 text-[28px] text-[#555555]"
            }
          >
            <Icon>{m.icon}</Icon>
            <span className="ml-8 flex-1">{m.label}</span>
            {m.arrow && (
              <svg viewBox="0 0 20 12" className="mb-3 h-3 w-5" fill="none" stroke="#909399" strokeWidth="2" aria-hidden="true">
                <path d="M1 1L10 10 19 1" />
              </svg>
            )}
          </a>
        ))}
      </nav>
    </aside>
  );
}

function Header() {
  return (
    <header className="relative z-10 flex h-[100px] items-center pr-[76px] pl-[34px] text-white shadow-[0_2px_8px_rgba(0,21,41,0.08)]">
      <button type="button" aria-label="收起菜单" className="mr-16">
        <svg viewBox="0 0 32 28" className="h-7 w-8" fill="currentColor">
          <path d="M0 0H32V3H0ZM0 8H20V11H0ZM0 16H20V19H0ZM0 25H32V28H0ZM32 8V20L24 14Z" />
        </svg>
      </button>
      <a href="#" className="flex items-center gap-[10px] text-[32px] font-medium text-[#5cc3da]">
        北京
        <svg viewBox="0 0 26 32" className="mb-1 h-8 w-7" fill="none" stroke="currentColor" strokeWidth="2.500" aria-hidden="true">
          <path d="M13 30C8 23 2 18 2 12.500A11 11 0 0 1 24 12.500C24 18 18 23 13 30Z" />
          <circle cx="13" cy="13" r="4.500" />
        </svg>
      </a>
      <div className="ml-auto flex items-center gap-2 text-[28px]">
        <a href="#">申达运输</a>
        <span className="text-[24px]">|</span>
        <a href="#">退出</a>
      </div>
    </header>
  );
}

function Avatar() {
  return (
    <svg viewBox="0 0 100 100" className="size-[100px] rounded-full border-3 border-[#eeeeee] bg-white" role="img" aria-label="传智播客">
      <path d="M34 48C24 42 27 30 37 24C48 16 64 15 69 24C73 33 66 44 53 50V53L47 55V44C58 43 66 35 64 28C61 21 47 24 40 31C35 37 34 43 39 47Z" fill="#2a68a8" />
      <ellipse cx="50" cy="35" rx="9" ry="6" transform="rotate(-38 50 35)" fill="#dc2a25" />
      <text x="50" y="72" textAnchor="middle" fill="#222222" className="text-[12px] font-bold">传智播客</text>
      <text x="50" y="81" textAnchor="middle" fill="#333333" className="font-['Liberation_Sans',sans-serif] text-[7px] font-bold">www.itcast.cn</text>
    </svg>
  );
}

function CardTitle({ children }: { children: React.ReactNode }) {
  return (
    <div className="pt-[26px]">
      <h2 className="text-[28px] leading-10 text-[#3a70d0]">{children}</h2>
      <div className="h-1 w-14 bg-[#ee8a88]" />
    </div>
  );
}

const totals = [["52348", "设备数"], ["64244", "机构数"], ["64244", "警告数"]];
const monitor = [["23523", "总仪表数"], ["64 %", "正常率"], ["23523", "待处理"], ["52348", "已处理"]];

export default function App() {
  return (
    <div className="flex h-screen flex-col overflow-hidden bg-[#efefef] font-[Inter,'Noto_Sans_CJK_SC',sans-serif]">
      <div className="h-[10px] shrink-0 border-b-2 border-[#a3aec8] bg-[#cddcf6]" />
      <div className="flex min-h-0 flex-1">
        <Sidebar />
        <div className="relative min-w-0 flex-1 overflow-hidden">
          <Backdrop />
          <Header />
          <main className="relative flex flex-col gap-[30px] px-[30px]">
            <section className="flex rounded-[10px] bg-white pt-[30px] pb-10 pl-[30px]">
              <Avatar />
              <div className="ml-5 pt-[2px]">
                <p className="text-[32px] leading-[50px] text-[#333333]">欢迎，admin，祝您开心每一天</p>
                <p className="text-[24px] leading-[50px] text-[#999999]">上次登录时间: 2020-07-12</p>
              </div>
              <dl className="mt-[10px] ml-auto flex h-[90px]">
                {totals.map(([n, l]) => (
                  <div
                    key={l}
                    className="flex flex-col-reverse justify-end border-r-2 border-[#e6e6e6] px-[78px] pt-1 text-center last:border-r-0 last:pr-[66px]"
                  >
                    <dt className="text-[24px] leading-[46px] text-[#999999]">{l}</dt>
                    <dd className="text-[36px] leading-[46px] text-[#6a8cf0]">{n}</dd>
                  </div>
                ))}
              </dl>
            </section>

            <section className="rounded-[10px] bg-white px-[30px] pb-[30px]">
              <div className="flex h-36 justify-between">
                <CardTitle>实时监控图</CardTitle>
                <dl className="flex gap-[76px] pt-[35px] pr-[38px]">
                  {monitor.map(([n, l]) => (
                    <div key={l} className="flex flex-col-reverse justify-end text-center">
                      <dt className="text-[24px] leading-10 text-[#999999]">{l}</dt>
                      <dd className="text-[32px] leading-10 text-[#333333]">{n}</dd>
                    </div>
                  ))}
                </dl>
              </div>
              <CityMap />
            </section>

            <section className="rounded-[10px] bg-white px-[30px] pb-[30px]">
              <CardTitle>设备数趋势图</CardTitle>
              <div className="mt-4">
                <TrendChart />
              </div>
            </section>
          </main>
        </div>
      </div>
    </div>
  );
}
